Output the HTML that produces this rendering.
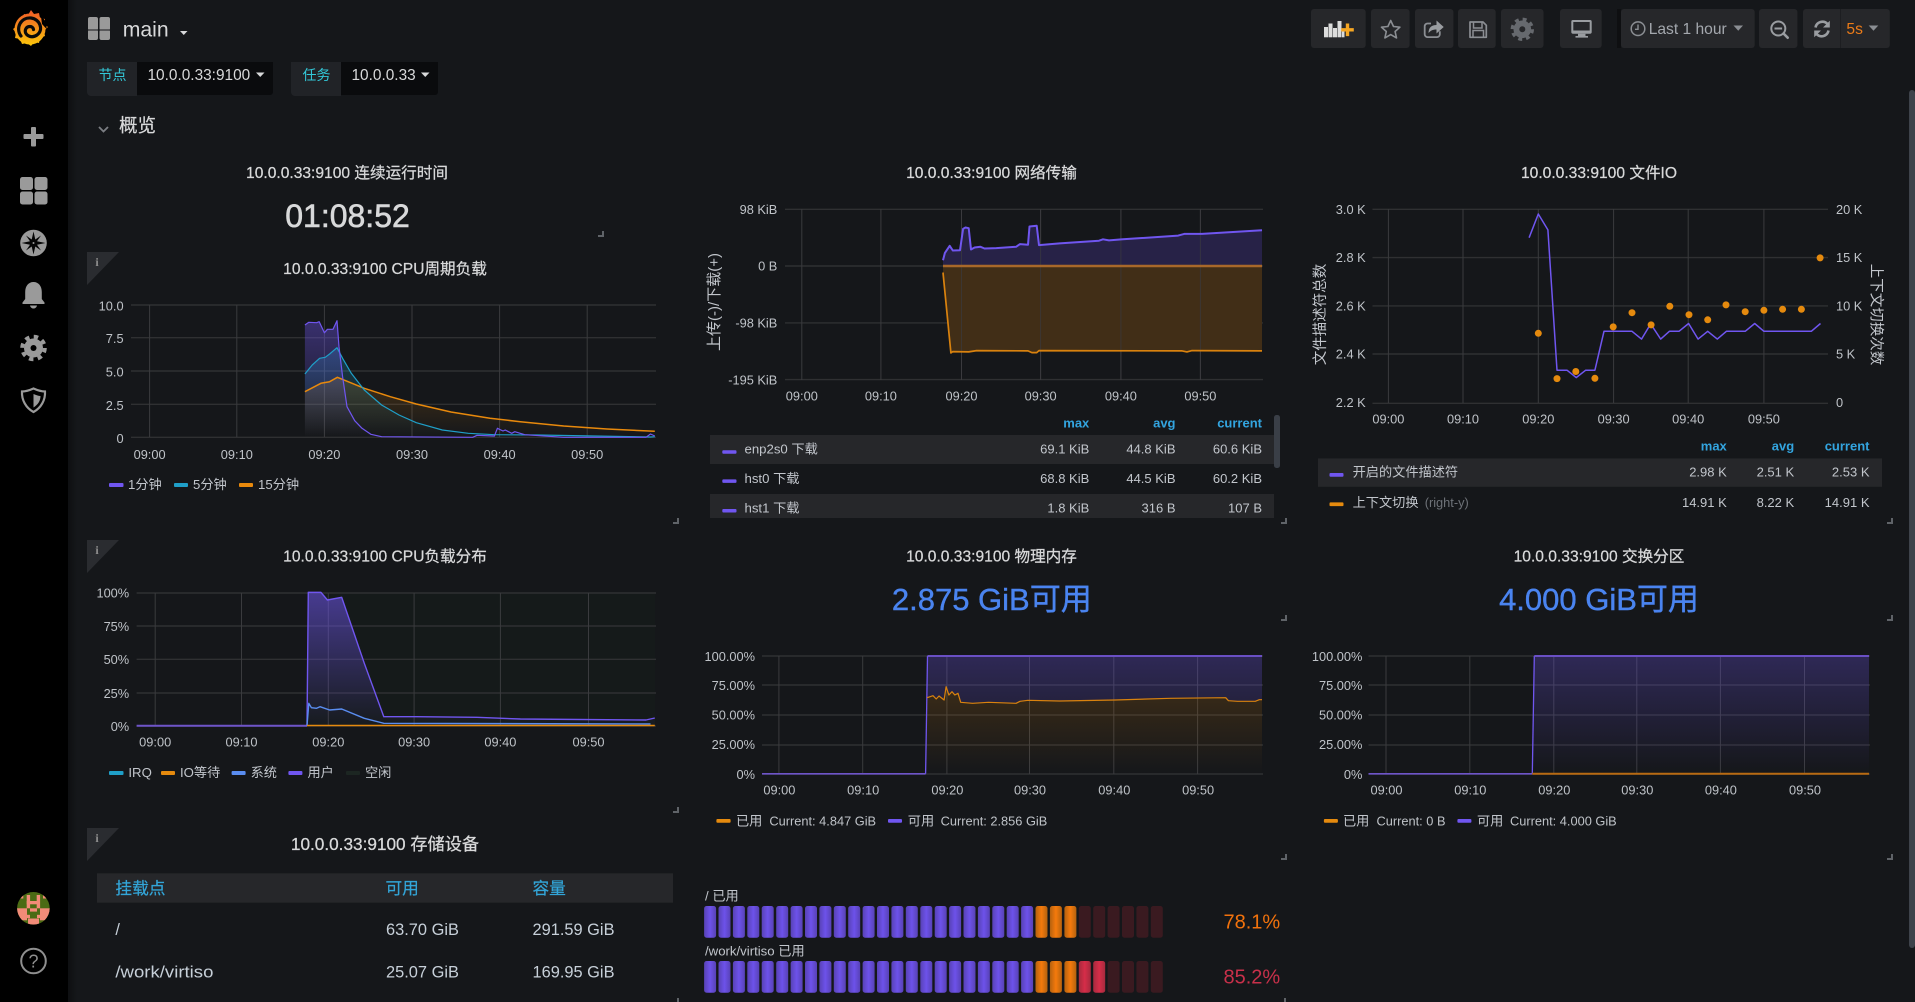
<!DOCTYPE html>
<html lang="zh"><head><meta charset="utf-8"><title>main - Grafana</title>
<style>
html,body{margin:0;padding:0;background:#15171a;overflow:hidden}
svg{display:block}
text{font-family:"Liberation Sans","Noto Sans CJK SC",sans-serif}
.t{font-size:15.6px;fill:#d8d9da;stroke:#d8d9da;stroke-width:.25;text-anchor:middle}
.a{font-size:12.8px;fill:#bfc3c8;text-anchor:middle}
.r{font-size:12.8px;fill:#bfc3c8;text-anchor:end}
.s{font-size:12.8px;fill:#bfc3c8}
.l{font-size:13.2px;fill:#c2c6cc}
.v{font-size:13px;fill:#c2c6cc;text-anchor:end}
.h{font-size:13px;font-weight:bold;fill:#33a5e0;text-anchor:end}
.y{font-size:14.5px;fill:#c2c6cc;text-anchor:middle}
.big{font-size:31px;fill:#4a84f0;stroke:#4a84f0;stroke-width:.4;text-anchor:middle}
.th{font-size:16.7px;fill:#33a5d8;stroke:#33a5d8;stroke-width:.2}
.td{font-size:16.4px;fill:#c7d0d9}
.i{font-family:"Liberation Serif",serif;font-size:12px;font-weight:bold;fill:#8e8e8e;text-anchor:middle}
.gh{stroke:#2f3032;stroke-width:1.4;fill:none}
.gv{stroke:#3a3b3e;stroke-width:1;fill:none}
.ln{fill:none;stroke-linejoin:round}
.c{fill:none;stroke:#5f6368;stroke-width:2}
.ic{fill:#9a9a9a}
</style></head><body>
<svg width="1915" height="1002" viewBox="0 0 1915 1002" xmlns="http://www.w3.org/2000/svg">
<defs>
<linearGradient id="logo" x1="0" y1="10" x2="0" y2="47" gradientUnits="userSpaceOnUse"><stop offset="0" stop-color="#f05a28"/><stop offset="1" stop-color="#fbca0a"/></linearGradient>
<linearGradient id="side" x1="0" x2="1" y1="0" y2="0"><stop offset="0" stop-color="#0e0f11"/><stop offset="1" stop-color="#15171a"/></linearGradient>
<linearGradient id="f1p" x1="0" y1="320" x2="0" y2="437" gradientUnits="userSpaceOnUse"><stop offset="0" stop-color="#7056f0" stop-opacity=".4"/><stop offset="1" stop-color="#7056f0" stop-opacity="0"/></linearGradient>
<linearGradient id="f1t" x1="0" y1="347" x2="0" y2="437" gradientUnits="userSpaceOnUse"><stop offset="0" stop-color="#1f9fc8" stop-opacity=".3"/><stop offset="1" stop-color="#1f9fc8" stop-opacity="0"/></linearGradient>
<linearGradient id="f1o" x1="0" y1="377" x2="0" y2="437" gradientUnits="userSpaceOnUse"><stop offset="0" stop-color="#e8890c" stop-opacity=".22"/><stop offset="1" stop-color="#e8890c" stop-opacity="0"/></linearGradient>
<linearGradient id="f4p" x1="0" y1="593" x2="0" y2="726" gradientUnits="userSpaceOnUse"><stop offset="0" stop-color="#7056f0" stop-opacity=".55"/><stop offset="1" stop-color="#7056f0" stop-opacity=".02"/></linearGradient>
<linearGradient id="f5p" x1="0" y1="656" x2="0" y2="774" gradientUnits="userSpaceOnUse"><stop offset="0" stop-color="#7056f0" stop-opacity=".28"/><stop offset="1" stop-color="#7056f0" stop-opacity="0"/></linearGradient>
<linearGradient id="f5o" x1="0" y1="695" x2="0" y2="774" gradientUnits="userSpaceOnUse"><stop offset="0" stop-color="#e8890c" stop-opacity=".16"/><stop offset="1" stop-color="#e8890c" stop-opacity="0"/></linearGradient>
<linearGradient id="cp" x1="0" x2="1" y1="0" y2="0"><stop offset="0" stop-color="#5842b6"/><stop offset=".5" stop-color="#6d52ea"/><stop offset="1" stop-color="#5842b6"/></linearGradient>
<linearGradient id="co" x1="0" x2="1" y1="0" y2="0"><stop offset="0" stop-color="#b5620f"/><stop offset=".5" stop-color="#f57a0c"/><stop offset="1" stop-color="#b5620f"/></linearGradient>
<linearGradient id="cr" x1="0" x2="1" y1="0" y2="0"><stop offset="0" stop-color="#a62a3e"/><stop offset=".5" stop-color="#d62d48"/><stop offset="1" stop-color="#a62a3e"/></linearGradient>
<clipPath id="av"><circle cx="33.4" cy="908.3" r="16.3"/></clipPath>
<clipPath id="lg"><rect x="700" y="410" width="590" height="108"/></clipPath>
<g id="purple" fill="url(#cp)">
<rect x="704.1" width="12" height="31.7" rx="2.5"/><rect x="718.5" width="12" height="31.7" rx="2.5"/><rect x="732.9" width="12" height="31.7" rx="2.5"/><rect x="747.3" width="12" height="31.7" rx="2.5"/><rect x="761.7" width="12" height="31.7" rx="2.5"/><rect x="776.2" width="12" height="31.7" rx="2.5"/><rect x="790.6" width="12" height="31.7" rx="2.5"/><rect x="805" width="12" height="31.7" rx="2.5"/><rect x="819.4" width="12" height="31.7" rx="2.5"/><rect x="833.8" width="12" height="31.7" rx="2.5"/><rect x="848.2" width="12" height="31.7" rx="2.5"/><rect x="862.6" width="12" height="31.7" rx="2.5"/><rect x="877" width="12" height="31.7" rx="2.5"/><rect x="891.4" width="12" height="31.7" rx="2.5"/><rect x="905.8" width="12" height="31.7" rx="2.5"/><rect x="920.3" width="12" height="31.7" rx="2.5"/><rect x="934.7" width="12" height="31.7" rx="2.5"/><rect x="949.1" width="12" height="31.7" rx="2.5"/><rect x="963.5" width="12" height="31.7" rx="2.5"/><rect x="977.9" width="12" height="31.7" rx="2.5"/><rect x="992.3" width="12" height="31.7" rx="2.5"/><rect x="1006.7" width="12" height="31.7" rx="2.5"/><rect x="1021.1" width="12" height="31.7" rx="2.5"/>
</g>
<g id="orange" fill="url(#co)"><rect x="1035.5" width="12" height="31.7" rx="2.5"/><rect x="1049.9" width="12" height="31.7" rx="2.5"/><rect x="1064.4" width="12" height="31.7" rx="2.5"/></g>
<g id="dark" fill="#3a1a20"><rect x="1107.6" width="12" height="31.7" rx="2.5"/><rect x="1122" width="12" height="31.7" rx="2.5"/><rect x="1136.4" width="12" height="31.7" rx="2.5"/><rect x="1150.8" width="12" height="31.7" rx="2.5"/></g>
</defs>

<rect width="1915" height="1002" fill="#15171a"/>
<!-- sidebar -->
<rect x="68" width="9" height="1002" fill="url(#side)"/>
<rect width="68" height="1002" fill="#000"/>
<circle cx="30" cy="29" r="15.5" fill="url(#logo)"/>
<path d="M31 10l3 4 5-1 1 5 5 1-1 5 4 3-4 4 1 5-5 2-1 5-5-1-3 4-4-3-5 1-2-5-5-1 1-5-3-4 4-3 0-5 5-2 2-5 4 1z" fill="url(#logo)"/>
<path d="M21 36C15 28 21 17 31 18C40 19 44 30 37 35C31 39 24 35 25.500 29.500C27 25.500 33 25.500 33.500 29.500" fill="none" stroke="#0a0a0a" stroke-width="3.200" stroke-linecap="round"/>
<path d="M41 16.500C45 19 47 24 46.500 29L42 24z" fill="#000"/>
<rect class="ic" x="31" y="127" width="5" height="19.500" rx="1"/><rect class="ic" x="23.500" y="134" width="20" height="5" rx="1"/>
<rect class="ic" x="20" y="177" width="13" height="13" rx="2.500"/><rect class="ic" x="34.500" y="177" width="13" height="13" rx="2.500"/><rect class="ic" x="20" y="191.500" width="13" height="13" rx="2.500"/><rect class="ic" x="34.500" y="191.500" width="13" height="13" rx="2.500"/>
<circle class="ic" cx="33.500" cy="243" r="13.300"/>
<path d="M33.500 231.500L35.300 239.500 41 235.500 37 241.200 45.500 243 37 244.800 41 250.500 35.300 246.500 33.500 254.500 31.700 246.500 26 250.500 30 244.800 21.500 243 30 241.200 26 235.500 31.700 239.500Z" fill="#060606"/><circle cx="33.500" cy="243" r="1" fill="#9a9a9a"/>
<path class="ic" d="M33.500 282c-5 0-8.300 4-8.300 10v7l-2.700 3.500v1.500h22v-1.500l-2.700-3.500v-7c0-6-3.300-10-8.300-10z"/><path class="ic" d="M30 305.500h7c-1 4-6 4-7 0z"/>
<circle class="ic" cx="33.500" cy="348" r="9.500"/><circle cx="33.500" cy="348" r="11.300" fill="none" stroke="#9a9a9a" stroke-width="4" stroke-dasharray="4.430 4.430"/><circle cx="33.500" cy="348" r="3" fill="#000"/>
<path d="M33.500 388.500C38 390.500 42 391.500 45 391.500C45.500 400 41 408 33.500 412C26 408 21.500 400 22 391.500C25 391.500 29 390.500 33.500 388.500Z" fill="none" stroke="#9a9a9a" stroke-width="2.200"/>
<path class="ic" d="M33.500 394C36 395 38.500 396 40.500 396C40.500 401 38 404.500 33.500 407.500Z"/>
<circle cx="33.400" cy="908.300" r="16.300" fill="#4b6b14"/>
<g clip-path="url(#av)" fill="#f28b78"><rect x="26.700" y="895" width="3.400" height="13.300"/><rect x="36.700" y="895" width="3.400" height="13.300"/><rect x="26.700" y="901" width="13.300" height="3.300"/><rect x="20" y="895.500" width="3.300" height="3"/><rect x="43" y="895.500" width="3.300" height="3"/><rect x="17" y="908.300" width="10" height="12"/><rect x="40" y="908.300" width="10" height="12"/><rect x="30" y="908.300" width="7" height="3.300"/><rect x="26.700" y="914.800" width="3.300" height="3.300"/><rect x="37" y="914.800" width="3.300" height="3.300"/><rect x="28" y="918.500" width="11" height="6"/></g>
<circle cx="33.500" cy="961" r="12.300" fill="none" stroke="#8f8f8f" stroke-width="2"/>
<text x="33.500" y="967.500" font-size="18" fill="#8f8f8f" text-anchor="middle">?</text>

<!-- header -->
<g fill="#9a9a9a"><rect x="88" y="17" width="10" height="13.500" rx="2"/><rect x="99.500" y="17" width="10.500" height="13.500" rx="2"/><rect x="88" y="29.500" width="10" height="10.500" rx="2" /><rect x="99.500" y="29.500" width="10.500" height="10.500" rx="2"/></g>
<rect x="88" y="29.500" width="22" height="1" fill="#15171a"/>
<text x="122.700" y="36.700" font-size="21.200" fill="#d8d9da">main</text>
<path d="M180 31h7.500l-3.750 4z" fill="#d8d9da"/>
<path d="M87 62h50v34h-46a4 4 0 0 1-4-4z" fill="#212327"/>
<path d="M137 62h136v30a3 3 0 0 1-3 3h-133z" fill="#0a0b0d"/>
<text x="98.500" y="80" font-size="14" fill="#33c8d8">节点</text>
<text x="147.500" y="80" font-size="15.400" fill="#d8d9da">10.0.0.33:9100</text>
<path d="M256 72.500h8.500l-4.250 4.500z" fill="#d8d9da"/>
<path d="M291 62h50v34h-46a4 4 0 0 1-4-4z" fill="#212327"/>
<path d="M341 62h97v30a3 3 0 0 1-3 3h-94z" fill="#0a0b0d"/>
<text x="302.500" y="80" font-size="14" fill="#33c8d8">任务</text>
<text x="351.500" y="80" font-size="15.400" fill="#d8d9da">10.0.0.33</text>
<path d="M421 72.500h8.500l-4.250 4.500z" fill="#d8d9da"/>
<path d="M99 127l4.500 4.500 4.500-4.500" fill="none" stroke="#7b7e83" stroke-width="1.800"/>
<text x="119" y="132" font-size="18.500" fill="#d8d9da" stroke="#d8d9da" stroke-width=".2">概览</text>

<!-- toolbar -->
<g fill="#26272a">
<rect x="1311" y="9" width="54.700" height="39" rx="3"/><rect x="1371" y="9" width="38.600" height="39" rx="3"/><rect x="1415" y="9" width="38.400" height="39" rx="3"/><rect x="1458" y="9" width="37.700" height="39" rx="3"/><rect x="1501" y="9" width="42.500" height="39" rx="3"/><rect x="1560" y="9" width="41.700" height="39" rx="3"/><rect x="1621" y="9" width="133.700" height="39" rx="3"/><rect x="1759" y="9" width="38.400" height="39" rx="3"/><rect x="1803" y="9" width="86.800" height="39" rx="3"/></g>
<rect x="1617" y="9" width="4" height="39" fill="#0e0f11"/>
<g fill="#dcdcdc"><rect x="1324" y="27" width="4" height="10.300"/><rect x="1328.500" y="23.500" width="4" height="13.800"/><rect x="1333" y="28" width="4" height="9.300"/><rect x="1337.500" y="21" width="4" height="16.300"/><rect x="1342" y="30" width="2.500" height="7.300"/></g>
<path d="M1345.800 23.500h3.400v4.600h4.600v3.400h-4.600v4.600h-3.400v-4.600h-4.600v-3.400h4.600z" fill="#f5a623"/>
<path d="M1390.700 20.500l2.800 6 6.400.7-4.800 4.300 1.400 6.400-5.800-3.300-5.800 3.300 1.400-6.400-4.800-4.300 6.400-.7z" fill="none" stroke="#8b8e93" stroke-width="1.600" stroke-linejoin="round"/>
<path d="M1431 23.500h-3.500a2.800 2.800 0 0 0-2.800 2.800v8a2.800 2.800 0 0 0 2.800 2.800h9.500a2.800 2.800 0 0 0 2.800-2.800v-3" fill="none" stroke="#8b8e93" stroke-width="1.800"/>
<path d="M1428.500 33.500c0-6 3-8.500 8-8.500v-4.500l7.200 6.500-7.200 6.500v-4c-4 0-6 1.300-8 3.500z" fill="#9a9da1"/>
<path d="M1470 22h13l3.300 3.300v12h-16.300z" fill="none" stroke="#8b8e93" stroke-width="1.700" stroke-linejoin="round"/>
<path d="M1473.500 22v6h8.500v-6M1473 37v-6.500h10.500v6.500" fill="none" stroke="#8b8e93" stroke-width="1.500"/>
<circle cx="1522.300" cy="29.300" r="8.800" fill="#66696e"/><circle cx="1522.300" cy="29.300" r="10" fill="none" stroke="#66696e" stroke-width="3.400" stroke-dasharray="3.930 3.930"/><circle cx="1522.300" cy="29.300" r="3" fill="#26272a"/>
<path d="M1573 20h17a1.700 1.700 0 0 1 1.700 1.700v10.300a1.700 1.700 0 0 1-1.700 1.700h-17a1.700 1.700 0 0 1-1.700-1.700v-10.300a1.700 1.700 0 0 1 1.700-1.700zm.3 2v8.500h16.400v-8.500z" fill="#9a9da1" fill-rule="evenodd"/>
<path d="M1578 33.700h7.500v2.300h2.500v1.600h-12.500v-1.600h2.500z" fill="#9a9da1"/>
<circle cx="1638" cy="28.700" r="6.800" fill="none" stroke="#8b8e93" stroke-width="1.500"/><path d="M1638 24.500v4.800h-3" fill="none" stroke="#8b8e93" stroke-width="1.400"/>
<text x="1648.700" y="34" font-size="15.600" fill="#a4a8ae">Last 1 hour</text>
<path d="M1733.500 25.500h9.500l-4.750 5.300z" fill="#8b8e93"/>
<circle cx="1778.300" cy="28.500" r="7" fill="none" stroke="#9a9da1" stroke-width="2"/><path d="M1774.500 28.500h7.600" stroke="#9a9da1" stroke-width="2"/><path d="M1783.500 33.500l4.200 4.200" stroke="#9a9da1" stroke-width="2.600" stroke-linecap="round"/>
<path d="M1815.500 27.500a7 7 0 0 1 12-3.500" fill="none" stroke="#9a9da1" stroke-width="2.600"/><path d="M1829.800 20.700v6.800h-6.800z" fill="#9a9da1"/>
<path d="M1828.500 30.500a7 7 0 0 1-12 3.500" fill="none" stroke="#9a9da1" stroke-width="2.600"/><path d="M1814.200 37.300v-6.800h6.800z" fill="#9a9da1"/>
<rect x="1840" y="9" width="1" height="39" fill="#1d1e21"/>
<text x="1846.400" y="34" font-size="15.600" fill="#eb7b18">5s</text>
<path d="M1868.700 25.500h9.600l-4.800 5.300z" fill="#8b8e93"/>
<rect x="1909" y="90" width="6" height="858" rx="3" fill="#3e434b"/>

<!-- Panel: uptime -->
<text class="t" x="347" y="178">10.0.0.33:9100 连续运行时间</text>
<text x="347.500" y="227" font-size="32" fill="#d8d9da" stroke="#d8d9da" stroke-width=".6" text-anchor="middle">01:08:52</text>
<path class="c" d="M603 231v5h-5"/>

<!-- Panel: CPU load -->
<polygon points="87,252 119,252 87,285" fill="#2a2c30"/><text class="i" x="97" y="266">i</text>
<text class="t" x="385" y="274">10.0.0.33:9100 CPU周期负载</text>
<path class="gh" d="M131 305H656M131 337.700H656M131 371H656M131 404.300H656M131 437.300H656"/>
<path class="gv" d="M149.600 305V437M236.800 305V437M324.400 305V437M412 305V437M499.600 305V437M587.200 305V437"/>
<path d="M304.900 437.300L304.900 391.700 320.900 383.300 329.600 381.700 337.400 377.300 364.300 388.300 390.300 396.700 416.300 404 451 412 490 418.300 520.400 421.700 563.700 426 607 429 654.800 431.300 654.800 437.300Z" fill="url(#f1o)"/>
<path d="M304.900 437.300L304.900 374 312.200 365 319.600 358.300 325.200 357.300 329.600 354 337 347.700 342.600 358.300 351.300 373.300 364.300 390 381.600 405 399 415 416.300 422.700 442.300 430 468.300 433.300 494.400 434.700 537.700 435 654.800 437.300Z" fill="url(#f1t)"/>
<path d="M304.900 437.300L304.900 325 308.800 322.300 316.600 322.700 319.200 321.700 324.400 332.700 327.400 329.300 333 329.300 337 320.700 339 346.700 342.600 376.700 347 406.700 354.700 420.700 362 428.300 370.800 434.300 381.600 436.700 400 437.300Z" fill="url(#f1p)"/>
<path class="ln" stroke="#e8890c" stroke-width="1.500" d="M304.900 391.700L320.900 383.300 329.600 381.700 337.400 377.300 364.300 388.300 390.300 396.700 416.300 404 451 412 490 418.300 520.400 421.700 563.700 426 607 429 654.800 431.300"/>
<path class="ln" stroke="#1f9fc8" stroke-width="1.200" d="M304.900 374L312.200 365 319.600 358.300 325.200 357.300 329.600 354 337 347.700 342.600 358.300 351.300 373.300 364.300 390 381.600 405 399 415 416.300 422.700 442.300 430 468.300 433.300 494.400 434.700 537.700 435 650.500 437 654.800 436.700"/>
<path class="ln" stroke="#7056f0" stroke-width="1.200" d="M304.900 325L308.800 322.300 316.600 322.700 319.200 321.700 324.400 332.700 327.400 329.300 333 329.300 337 320.700 339 346.700 342.600 376.700 347 406.700 354.700 420.700 362 428.300 370.800 434.300 381.600 436.700 472.700 437.300 477 435.300 494.400 436 497.400 428.300 503 431 505.200 430 511.700 433.300 514.800 431.700 524.700 434.700 563.700 437.300 646 437.300 650.500 434 654.800 436"/>
<text class="r" x="123.600" y="310.500">10.0</text><text class="r" x="123.600" y="343">7.5</text><text class="r" x="123.600" y="376.500">5.0</text><text class="r" x="123.600" y="410">2.5</text><text class="r" x="123.600" y="443">0</text>
<text class="a" x="149.600" y="459">09:00</text><text class="a" x="236.800" y="459">09:10</text><text class="a" x="324.400" y="459">09:20</text><text class="a" x="412" y="459">09:30</text><text class="a" x="499.600" y="459">09:40</text><text class="a" x="587.200" y="459">09:50</text>
<rect x="109" y="483" width="14.500" height="4" rx="1" fill="#7056f0"/><text class="l" x="128" y="489">1分钟</text>
<rect x="174" y="483" width="14" height="4" rx="1" fill="#1f9fc8"/><text class="l" x="193" y="489">5分钟</text>
<rect x="239" y="483" width="14" height="4" rx="1" fill="#e8890c"/><text class="l" x="258" y="489">15分钟</text>
<path class="c" d="M678 518v5h-5"/>

<!-- Panel: Network -->
<text class="t" x="991.500" y="178">10.0.0.33:9100 网络传输</text>
<path class="gh" d="M785 209.300H1263M785 266H1263M785 322.900H1263M785 379.600H1263"/>
<path class="gv" d="M801.800 209V380M880.900 209V380M961.500 209V380M1040.600 209V380M1120.900 209V380M1200.400 209V380"/>
<path d="M943 266V260.300L944.900 252.900 949.700 245.800 952.800 250.500 960 250.200 963.100 228.900 965.500 227.500 968.700 228.200 971 249.500 974.600 247.500 980.500 246.800 984.500 248.500 996.300 248.100 1016.100 246.800 1020 244.100 1028 244.800 1029.500 226.500 1036.700 225.800 1039 245.100 1059.600 243.400 1099 240.700 1103 239.300 1109 240.400 1122.900 239.300 1178.200 235.600 1184.200 233.900 1202 233.900 1262 230.200V266Z" fill="#28234a" fill-opacity=".95"/>
<path d="M943 266V272.500L950.900 352.900 952.800 351.600 968.700 351.900 976.600 350.600 1028 350.900 1031.900 352.600 1036.700 352.600 1039 350.600 1182.200 350.900 1186.900 351.900 1192 350.600 1262 350.900V266Z" fill="#412e17"/>
<path class="gv" d="M961.500 209V380M1040.600 209V380M1120.900 209V380M1200.400 209V380" stroke-opacity=".7"/>
<path d="M943 266H1262" stroke="#a8682a" stroke-width="2.400"/>
<path class="ln" stroke="#7056f0" stroke-width="2" d="M943 260.300L944.900 252.900 949.700 245.800 952.800 250.500 960 250.200 963.100 228.900 965.500 227.500 968.700 228.200 971 249.500 974.600 247.500 980.500 246.800 984.500 248.500 996.300 248.100 1016.100 246.800 1020 244.100 1028 244.800 1029.500 226.500 1036.700 225.800 1039 245.100 1059.600 243.400 1099 240.700 1103 239.300 1109 240.400 1122.900 239.300 1178.200 235.600 1184.200 233.900 1202 233.900 1262 230.200"/>
<path class="ln" stroke="#d9820e" stroke-width="1.700" d="M943 272.500L950.900 352.900 952.800 351.600 968.700 351.900 976.600 350.600 1028 350.900 1031.900 352.600 1036.700 352.600 1039 350.600 1182.200 350.900 1186.900 351.900 1192 350.600 1262 350.900"/>
<text class="r" x="777.300" y="213.800">98 KiB</text><text class="r" x="777.300" y="270.500">0 B</text><text class="r" x="777.300" y="327.300">-98 KiB</text><text class="r" x="777.300" y="384.500">-195 KiB</text>
<text class="a" x="801.800" y="400.600">09:00</text><text class="a" x="880.900" y="400.600">09:10</text><text class="a" x="961.500" y="400.600">09:20</text><text class="a" x="1040.600" y="400.600">09:30</text><text class="a" x="1120.900" y="400.600">09:40</text><text class="a" x="1200.400" y="400.600">09:50</text>
<text class="y" transform="translate(719 302) rotate(-90)" style="font-size:15px">上传(-)/下载(+)</text>
<text class="h" x="1089.300" y="427.700">max</text><text class="h" x="1175.500" y="427.700">avg</text><text class="h" x="1262" y="427.700">current</text>
<g clip-path="url(#lg)">
<rect x="710" y="435" width="564" height="29" fill="#26272a"/><rect x="710" y="494" width="564" height="30" fill="#26272a"/>
<rect x="722.300" y="450.300" width="14.200" height="3.500" rx="1" fill="#7056f0"/><text class="l" x="744.500" y="453.700">enp2s0 下载</text><text class="v" x="1089.300" y="453.700">69.1 KiB</text><text class="v" x="1175.500" y="453.700">44.8 KiB</text><text class="v" x="1262" y="453.700">60.6 KiB</text>
<rect x="722.300" y="479.400" width="14.200" height="3.500" rx="1" fill="#7056f0"/><text class="l" x="744.500" y="482.800">hst0 下载</text><text class="v" x="1089.300" y="482.800">68.8 KiB</text><text class="v" x="1175.500" y="482.800">44.5 KiB</text><text class="v" x="1262" y="482.800">60.2 KiB</text>
<rect x="722.300" y="509" width="14.200" height="3.500" rx="1" fill="#7056f0"/><text class="l" x="744.500" y="512.500">hst1 下载</text><text class="v" x="1089.300" y="512.500">1.8 KiB</text><text class="v" x="1175.500" y="512.500">316 B</text><text class="v" x="1262" y="512.500">107 B</text>
</g>
<rect x="1274" y="415" width="6" height="53" rx="2.500" fill="#3a3f47"/>
<path class="c" d="M1286 518v5h-5"/>

<!-- Panel: File IO -->
<text class="t" x="1599" y="178">10.0.0.33:9100 文件IO</text>
<path class="gh" d="M1372.500 209.300H1828M1372.500 257.600H1828M1372.500 305.900H1828M1372.500 354H1828M1372.500 403.300H1828"/>
<path class="gv" d="M1388.400 209V403M1463 209V403M1538.300 209V403M1613.600 209V403M1688.200 209V403M1763.900 209V403"/>
<path class="ln" stroke="#7056f0" stroke-width="1.500" d="M1529.100 237.700L1538.300 214 1547.900 229.900 1557 370.200 1567 370.200 1576.200 377.600 1585.700 370.200 1594.900 370.200 1604 331.300 1632 331.300 1641.500 339.100 1650.700 323.900 1660.700 339.100 1669.400 331.300 1679 331.300 1688.600 323.500 1698.100 339.100 1707.700 331.300 1717.300 339.100 1726.400 331.300 1745.200 331.300 1754.700 323.500 1763.900 331.300 1811.300 331.300 1820.500 323.500"/>
<g fill="#e58a0e"><circle cx="1538.300" cy="333.300" r="3.500"/><circle cx="1557" cy="378.600" r="3.500"/><circle cx="1575.800" cy="371.500" r="3.500"/><circle cx="1594.900" cy="378.300" r="3.500"/><circle cx="1613.200" cy="326.900" r="3.500"/><circle cx="1632" cy="312.700" r="3.500"/><circle cx="1651.100" cy="324.900" r="3.500"/><circle cx="1669.800" cy="306.300" r="3.500"/><circle cx="1689" cy="314.700" r="3.500"/><circle cx="1707.700" cy="319.800" r="3.500"/><circle cx="1726" cy="304.900" r="3.500"/><circle cx="1745.200" cy="311.700" r="3.500"/><circle cx="1763.900" cy="310.300" r="3.500"/><circle cx="1782.600" cy="309.300" r="3.500"/><circle cx="1801.400" cy="309.300" r="3.500"/><circle cx="1820.100" cy="257.900" r="3.500"/></g>
<text class="r" x="1365.700" y="213.800">3.0 K</text><text class="r" x="1365.700" y="262">2.8 K</text><text class="r" x="1365.700" y="310.500">2.6 K</text><text class="r" x="1365.700" y="358.500">2.4 K</text><text class="r" x="1365.700" y="407">2.2 K</text>
<text class="s" x="1836" y="213.800">20 K</text><text class="s" x="1836" y="262">15 K</text><text class="s" x="1836" y="310.500">10 K</text><text class="s" x="1836" y="358.500">5 K</text><text class="s" x="1836" y="407">0</text>
<text class="a" x="1388.400" y="423.600">09:00</text><text class="a" x="1463" y="423.600">09:10</text><text class="a" x="1538.300" y="423.600">09:20</text><text class="a" x="1613.600" y="423.600">09:30</text><text class="a" x="1688.200" y="423.600">09:40</text><text class="a" x="1763.900" y="423.600">09:50</text>
<text class="y" transform="translate(1325 314.500) rotate(-90)">文件描述符总数</text>
<text class="y" transform="translate(1871.500 314.500) rotate(90)">上下文切换次数</text>
<text class="h" x="1726.800" y="450.600">max</text><text class="h" x="1794.200" y="450.600">avg</text><text class="h" x="1869.500" y="450.600">current</text>
<rect x="1318" y="458.400" width="564" height="28.400" fill="#26272a"/>
<rect x="1329.500" y="473" width="14" height="3.700" rx="1" fill="#7056f0"/><text class="l" x="1352.600" y="476.700">开启的文件描述符</text><text class="v" x="1726.800" y="476.700">2.98 K</text><text class="v" x="1794.200" y="476.700">2.51 K</text><text class="v" x="1869.500" y="476.700">2.53 K</text>
<rect x="1329.500" y="502.400" width="14" height="3.700" rx="1" fill="#e58a0e"/><text class="l" x="1352.600" y="507">上下文切换</text><text x="1424.700" y="507" font-size="12.800" fill="#6e7278">(right-y)</text><text class="v" x="1726.800" y="507">14.91 K</text><text class="v" x="1794.200" y="507">8.22 K</text><text class="v" x="1869.500" y="507">14.91 K</text>
<path class="c" d="M1892 518v5h-5"/>

<!-- Panel: CPU dist -->
<polygon points="87,540 119,540 87,573" fill="#2a2c30"/><text class="i" x="97" y="554">i</text>
<text class="t" x="385" y="561.700">10.0.0.33:9100 CPU负载分布</text>
<rect x="307" y="593" width="348" height="133" fill="#1e3a28" fill-opacity=".08"/>
<path class="gh" d="M136.600 593H656M136.600 626H656M136.600 659.300H656M136.600 693H656M136.600 726H656"/>
<path class="gv" d="M155.200 593V726M241.500 593V726M328.300 593V726M414.100 593V726M500.400 593V726M588.500 593V726"/>
<path d="M307 725.700L308.300 592.300 320.900 592.300 327.400 600 341.700 597.300 364.300 663.300 383.800 716.700 416.300 716.700 477 717.300 520.400 719 646 720 654.800 718V726H307Z" fill="url(#f4p)"/>
<path class="ln" stroke="#6e54c8" stroke-width="2" d="M136.600 725.700H307"/>
<path class="ln" stroke="#7056f0" stroke-width="1.400" d="M307 725.700L308.300 592.300 320.900 592.300 327.400 600 341.700 597.300 364.300 663.300 383.800 716.700 416.300 716.700 477 717.300 520.400 719 646 720 654.800 718"/>
<path class="ln" stroke="#5a8df0" stroke-width="1.400" d="M307 725.700L308.800 703.300 311.400 707.700 316.600 708.300 320 706.700 329.600 710 341.700 709 364.300 718.300 383.800 723.300 650.500 724"/>
<path class="ln" stroke="#e58a0e" stroke-width="1.400" d="M307 725.500H654.800"/>
<text class="r" x="129.200" y="597.500">100%</text><text class="r" x="129.200" y="631">75%</text><text class="r" x="129.200" y="664">50%</text><text class="r" x="129.200" y="698">25%</text><text class="r" x="129.200" y="731">0%</text>
<text class="a" x="155.200" y="746.700">09:00</text><text class="a" x="241.500" y="746.700">09:10</text><text class="a" x="328.300" y="746.700">09:20</text><text class="a" x="414.100" y="746.700">09:30</text><text class="a" x="500.400" y="746.700">09:40</text><text class="a" x="588.500" y="746.700">09:50</text>
<rect x="109" y="771" width="14.500" height="4" rx="1" fill="#1f9fc8"/><text class="l" x="128.400" y="777">IRQ</text>
<rect x="161" y="771" width="14" height="4" rx="1" fill="#e58a0e"/><text class="l" x="180" y="777">IO等待</text>
<rect x="231.600" y="771" width="14" height="4" rx="1" fill="#5a8df0"/><text class="l" x="250.600" y="777">系统</text>
<rect x="288.400" y="771" width="14" height="4" rx="1" fill="#7056f0"/><text class="l" x="307.500" y="777">用户</text>
<rect x="346" y="771" width="14" height="4" rx="1" fill="#1c2622"/><text class="l" x="365" y="777">空闲</text>
<path class="c" d="M678 807v5h-5"/>

<!-- Panel: Storage -->
<polygon points="87,828 119,828 87,861" fill="#2a2c30"/><text class="i" x="97" y="842">i</text>
<text class="t" x="385" y="850" style="font-size:17.200px">10.0.0.33:9100 存储设备</text>
<rect x="97" y="873.300" width="576" height="29.400" fill="#26272a"/>
<text class="th" x="115.400" y="894">挂载点</text><text class="th" x="385.500" y="894">可用</text><text class="th" x="532.500" y="894">容量</text>
<text class="td" x="115.400" y="934.800">/</text><text class="td" x="386" y="934.800">63.70 GiB</text><text class="td" x="532.500" y="934.800">291.59 GiB</text>
<text class="td" x="115.400" y="977.500" textLength="98" lengthAdjust="spacingAndGlyphs">/work/virtiso</text><text class="td" x="386" y="977.500">25.07 GiB</text><text class="td" x="532.500" y="977.500">169.95 GiB</text>
<path class="c" d="M678 998v4"/>

<!-- Panel: Memory -->
<text class="t" x="991.500" y="561.700">10.0.0.33:9100 物理内存</text>
<text class="big" x="991.800" y="610">2.875 GiB可用</text>
<path class="c" d="M1286 615v5h-5"/>
<path class="gh" d="M762 656H1263M762 685H1263M762 715H1263M762 745H1263M762 774H1263"/>
<path class="gv" d="M778.900 656V774M862.700 656V774M946.900 656V774M1029.500 656V774M1113.800 656V774M1197.600 656V774"/>
<path d="M927.100 697.700L927.500 656H1262V699.700L1259.300 699.700 1255.300 701.300 1237.500 701.300 1228.400 700.700 1225.700 697.700 1170.300 698.300 1115 700 1059.600 701 1028 700.300 1020 701.300 1016.100 703.300 988.400 702.300 972.600 703.300 960.700 702.300 958 693.300 954.800 695 952 691.700 948.900 695 946.100 686.700 944.100 700 939 696 936.200 699 933 695.700Z" fill="url(#f5p)"/>
<path d="M925.600 774L927.100 697.700 933 695.700 936.200 699 939 696 944.100 700 946.100 686.700 948.900 695 952 691.700 954.800 695 958 693.300 960.700 702.300 972.600 703.300 988.400 702.300 1016.100 703.300 1020 701.300 1028 700.300 1059.600 701 1115 700 1170.300 698.300 1225.700 697.700 1228.400 700.700 1237.500 701.300 1255.300 701.300 1259.300 699.700 1262 699.700V774Z" fill="url(#f5o)"/>
<path class="ln" stroke="#6e54c8" stroke-width="1.700" d="M762 773.800H925.600"/>
<path class="ln" stroke="#7056f0" stroke-width="1.300" d="M925.600 773.800L927.500 656"/>
<path class="ln" stroke="#6a50c4" stroke-width="2" d="M927.500 656H1262"/>
<path class="ln" stroke="#d9820e" stroke-width="1.200" d="M927.100 697.700L933 695.700 936.200 699 939 696 944.100 700 946.100 686.700 948.900 695 952 691.700 954.800 695 958 693.300 960.700 702.300 972.600 703.300 988.400 702.300 1016.100 703.300 1020 701.300 1028 700.300 1059.600 701 1115 700 1170.300 698.300 1225.700 697.700 1228.400 700.700 1237.500 701.300 1255.300 701.300 1259.300 699.700 1262 699.700"/>
<text class="r" x="755" y="660.900">100.00%</text><text class="r" x="755" y="690">75.00%</text><text class="r" x="755" y="719.500">50.00%</text><text class="r" x="755" y="749">25.00%</text><text class="r" x="755" y="779">0%</text>
<text class="a" x="779.400" y="794.300">09:00</text><text class="a" x="863.200" y="794.300">09:10</text><text class="a" x="947.400" y="794.300">09:20</text><text class="a" x="1030" y="794.300">09:30</text><text class="a" x="1114.300" y="794.300">09:40</text><text class="a" x="1198.100" y="794.300">09:50</text>
<rect x="716.400" y="819" width="14.200" height="3.700" rx="1" fill="#e58a0e"/><text class="l" x="736" y="825.300">已用</text><text class="s" x="769.400" y="825.300">Current: 4.847 GiB</text>
<rect x="888" y="819" width="14" height="3.700" rx="1" fill="#7056f0"/><text class="l" x="907.800" y="825.300">可用</text><text class="s" x="940.600" y="825.300">Current: 2.856 GiB</text>
<path class="c" d="M1286 854v5h-5"/>

<!-- Bar gauges -->
<text class="l" x="705" y="900.700">/ 已用</text>
<use href="#purple" y="906"/><use href="#orange" y="906"/><use href="#dark" y="906"/>
<rect x="1078.800" y="906" width="12" height="31.700" rx="2.500" fill="#3a1a20"/><rect x="1093.200" y="906" width="12" height="31.700" rx="2.500" fill="#3a1a20"/>
<text x="1280.200" y="928.300" font-size="20" fill="#f2720c" text-anchor="end">78.1%</text>
<text class="l" x="705" y="955.700">/work/virtiso 已用</text>
<use href="#purple" y="961"/><use href="#orange" y="961"/><use href="#dark" y="961"/>
<rect x="1078.800" y="961" width="12" height="31.700" rx="2.500" fill="url(#cr)"/><rect x="1093.200" y="961" width="12" height="31.700" rx="2.500" fill="url(#cr)"/>
<text x="1280.200" y="983.300" font-size="20" fill="#c8304a" text-anchor="end">85.2%</text>
<path class="c" d="M1285 998v4"/>

<!-- Panel: Swap -->
<text class="t" x="1599" y="561.700">10.0.0.33:9100 交换分区</text>
<text class="big" x="1599" y="610">4.000 GiB可用</text>
<path class="c" d="M1892 615v5h-5"/>
<path class="gh" d="M1368.500 656H1870M1368.500 685H1870M1368.500 715H1870M1368.500 745H1870M1368.500 774H1870"/>
<path class="gv" d="M1386 656V774M1469.800 656V774M1553.800 656V774M1636.800 656V774M1720.400 656V774M1804.500 656V774"/>
<path d="M1532.300 774L1534.300 656H1869V774Z" fill="url(#f5p)"/>
<path class="ln" stroke="#6e54c8" stroke-width="1.700" d="M1368.500 773.800H1532.300"/>
<path class="ln" stroke="#7056f0" stroke-width="1.300" d="M1532.300 773.800L1534.300 656"/>
<path class="ln" stroke="#6a50c4" stroke-width="2" d="M1534.300 656H1869"/>
<path class="ln" stroke="#b86a12" stroke-width="2" d="M1532.300 773.800H1869"/>
<text class="r" x="1362.400" y="660.900">100.00%</text><text class="r" x="1362.400" y="690">75.00%</text><text class="r" x="1362.400" y="719.500">50.00%</text><text class="r" x="1362.400" y="749">25.00%</text><text class="r" x="1362.400" y="779">0%</text>
<text class="a" x="1386.500" y="794.300">09:00</text><text class="a" x="1470.300" y="794.300">09:10</text><text class="a" x="1554.300" y="794.300">09:20</text><text class="a" x="1637.300" y="794.300">09:30</text><text class="a" x="1720.900" y="794.300">09:40</text><text class="a" x="1805" y="794.300">09:50</text>
<rect x="1323.900" y="819" width="14" height="3.700" rx="1" fill="#e58a0e"/><text class="l" x="1343" y="825.300">已用</text><text class="s" x="1376.500" y="825.300">Current: 0 B</text>
<rect x="1457.400" y="819" width="14" height="3.700" rx="1" fill="#7056f0"/><text class="l" x="1477" y="825.300">可用</text><text class="s" x="1510" y="825.300">Current: 4.000 GiB</text>
<path class="c" d="M1892 854v5h-5"/>
</svg>
</body></html>
